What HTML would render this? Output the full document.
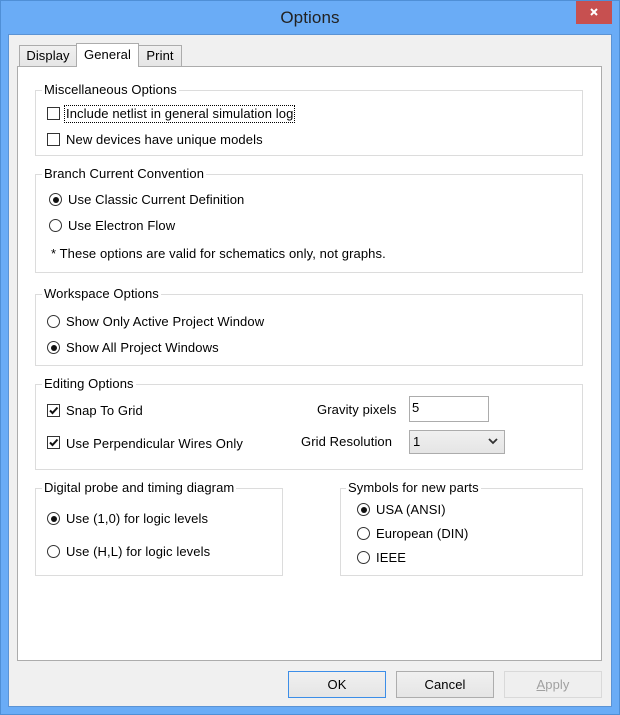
<!DOCTYPE html>
<html><head><meta charset="utf-8"><style>
*{box-sizing:border-box;margin:0;padding:0}
body{width:620px;height:715px;position:relative;overflow:hidden;background:#6aacf6;font-family:"Liberation Sans",sans-serif;font-size:13px;color:#000;letter-spacing:0.1px}
.a{position:absolute}
.win{left:0;top:0;width:620px;height:715px;border:1px solid #4f8fd6}
.client{left:8px;top:34px;width:604px;height:673px;background:#f0f0f0;border:1px solid #5b93d4}
.panel{left:17px;top:66px;width:585px;height:595px;background:#fff;border:1px solid #acacac}
.tab{height:22px;border:1px solid #acacac;border-bottom:none;background:linear-gradient(#f0f0f0,#e5e5e5);line-height:20px;text-align:center;font-size:13px}
.grp{border:1px solid #dcdcdc}
.lg{background:#fff;padding:0 2px;line-height:16px;white-space:nowrap}
.t{line-height:16px;white-space:nowrap}
.cb{width:13px;height:13px;border:1px solid #333;background:#fff}
.rb{width:13px;height:13px;border:1px solid #333;border-radius:50%;background:#fff}
.rb.on::after{content:"";position:absolute;left:2.5px;top:2.5px;width:6px;height:6px;border-radius:50%;background:#111}
.btn{height:27px;border:1px solid #adadad;background:linear-gradient(#f0f0f0,#e5e5e5);text-align:center;line-height:25px;font-size:13px}
</style></head><body>
<div class="a win"></div>
<div class="a t" style="left:0;width:620px;top:8px;text-align:center;font-size:17px;line-height:20px;color:#222">Options</div>
<div class="a" style="left:576px;top:1px;width:36px;height:23px;background:#c75050"></div>
<svg class="a" style="left:590px;top:8px" width="8" height="8" viewBox="0 0 8 8"><path d="M1 1L7 7M7 1L1 7" stroke="#fff" stroke-width="2"/></svg>
<div class="a client"></div>
<div class="a tab" style="left:19px;top:45px;width:58px">Display</div>
<div class="a tab" style="left:138px;top:45px;width:44px">Print</div>
<div class="a panel"></div>
<div class="a tab" style="left:76px;top:43px;width:63px;height:24px;background:#fff;z-index:2;line-height:22px">General</div>

<div class="a grp" style="left:35px;top:90px;width:548px;height:66px"></div>
<div class="a lg" style="left:42px;top:82px">Miscellaneous Options</div>
<div class="a cb" style="left:47px;top:107px"></div>
<div class="a t" style="left:65px;top:106px;outline:1px dotted #000;padding:0 1px">Include netlist in general simulation log</div>
<div class="a cb" style="left:47px;top:133px"></div>
<div class="a t" style="left:66px;top:132px">New devices have unique models</div>

<div class="a grp" style="left:35px;top:174px;width:548px;height:99px"></div>
<div class="a lg" style="left:42px;top:166px">Branch Current Convention</div>
<div class="a rb on" style="left:49px;top:193px"></div>
<div class="a t" style="left:68px;top:192px">Use Classic Current Definition</div>
<div class="a rb" style="left:49px;top:219px"></div>
<div class="a t" style="left:68px;top:218px">Use Electron Flow</div>
<div class="a t" style="left:51px;top:246px">* These options are valid for schematics only, not graphs.</div>

<div class="a grp" style="left:35px;top:294px;width:548px;height:72px"></div>
<div class="a lg" style="left:42px;top:286px">Workspace Options</div>
<div class="a rb" style="left:47px;top:315px"></div>
<div class="a t" style="left:66px;top:314px">Show Only Active Project Window</div>
<div class="a rb on" style="left:47px;top:341px"></div>
<div class="a t" style="left:66px;top:340px">Show All Project Windows</div>

<div class="a grp" style="left:35px;top:384px;width:548px;height:86px"></div>
<div class="a lg" style="left:42px;top:376px">Editing Options</div>
<div class="a cb" style="left:47px;top:404px"></div>
<svg class="a" style="left:48px;top:405px" width="11" height="11" viewBox="0 0 11 11"><path d="M2 5.5L4.5 8L9.5 2.5" stroke="#111" stroke-width="2" fill="none"/></svg>
<div class="a t" style="left:66px;top:403px">Snap To Grid</div>
<div class="a cb" style="left:47px;top:436px"></div>
<svg class="a" style="left:48px;top:437px" width="11" height="11" viewBox="0 0 11 11"><path d="M2 5.5L4.5 8L9.5 2.5" stroke="#111" stroke-width="2" fill="none"/></svg>
<div class="a t" style="left:66px;top:436px">Use Perpendicular Wires Only</div>
<div class="a t" style="left:317px;top:402px">Gravity pixels</div>
<div class="a" style="left:409px;top:396px;width:80px;height:26px;border:1px solid #acacac;background:#fff"></div>
<div class="a t" style="left:412px;top:400px">5</div>
<div class="a t" style="left:301px;top:434px">Grid Resolution</div>
<div class="a" style="left:409px;top:430px;width:96px;height:24px;border:1px solid #acacac;background:linear-gradient(#f0f0f0,#e5e5e5)"></div>
<div class="a t" style="left:413px;top:434px">1</div>
<svg class="a" style="left:488px;top:438px" width="10" height="7" viewBox="0 0 10 7"><path d="M1 1L5 5L9 1" stroke="#333" stroke-width="1.8" fill="none"/></svg>

<div class="a grp" style="left:35px;top:488px;width:248px;height:88px"></div>
<div class="a lg" style="left:42px;top:480px">Digital probe and timing diagram</div>
<div class="a rb on" style="left:47px;top:512px"></div>
<div class="a t" style="left:66px;top:511px">Use (1,0) for logic levels</div>
<div class="a rb" style="left:47px;top:545px"></div>
<div class="a t" style="left:66px;top:544px">Use (H,L) for logic levels</div>

<div class="a grp" style="left:340px;top:488px;width:243px;height:88px"></div>
<div class="a lg" style="left:346px;top:480px">Symbols for new parts</div>
<div class="a rb on" style="left:357px;top:503px"></div>
<div class="a t" style="left:376px;top:502px">USA (ANSI)</div>
<div class="a rb" style="left:357px;top:527px"></div>
<div class="a t" style="left:376px;top:526px">European (DIN)</div>
<div class="a rb" style="left:357px;top:551px"></div>
<div class="a t" style="left:376px;top:550px">IEEE</div>

<div class="a btn" style="left:288px;top:671px;width:98px;border-color:#3c8ee8">OK</div>
<div class="a btn" style="left:396px;top:671px;width:98px">Cancel</div>
<div class="a btn" style="left:504px;top:671px;width:98px;color:#a0a0a0;background:#efefef;border-color:#d9d9d9"><u>A</u>pply</div>
</body></html>
